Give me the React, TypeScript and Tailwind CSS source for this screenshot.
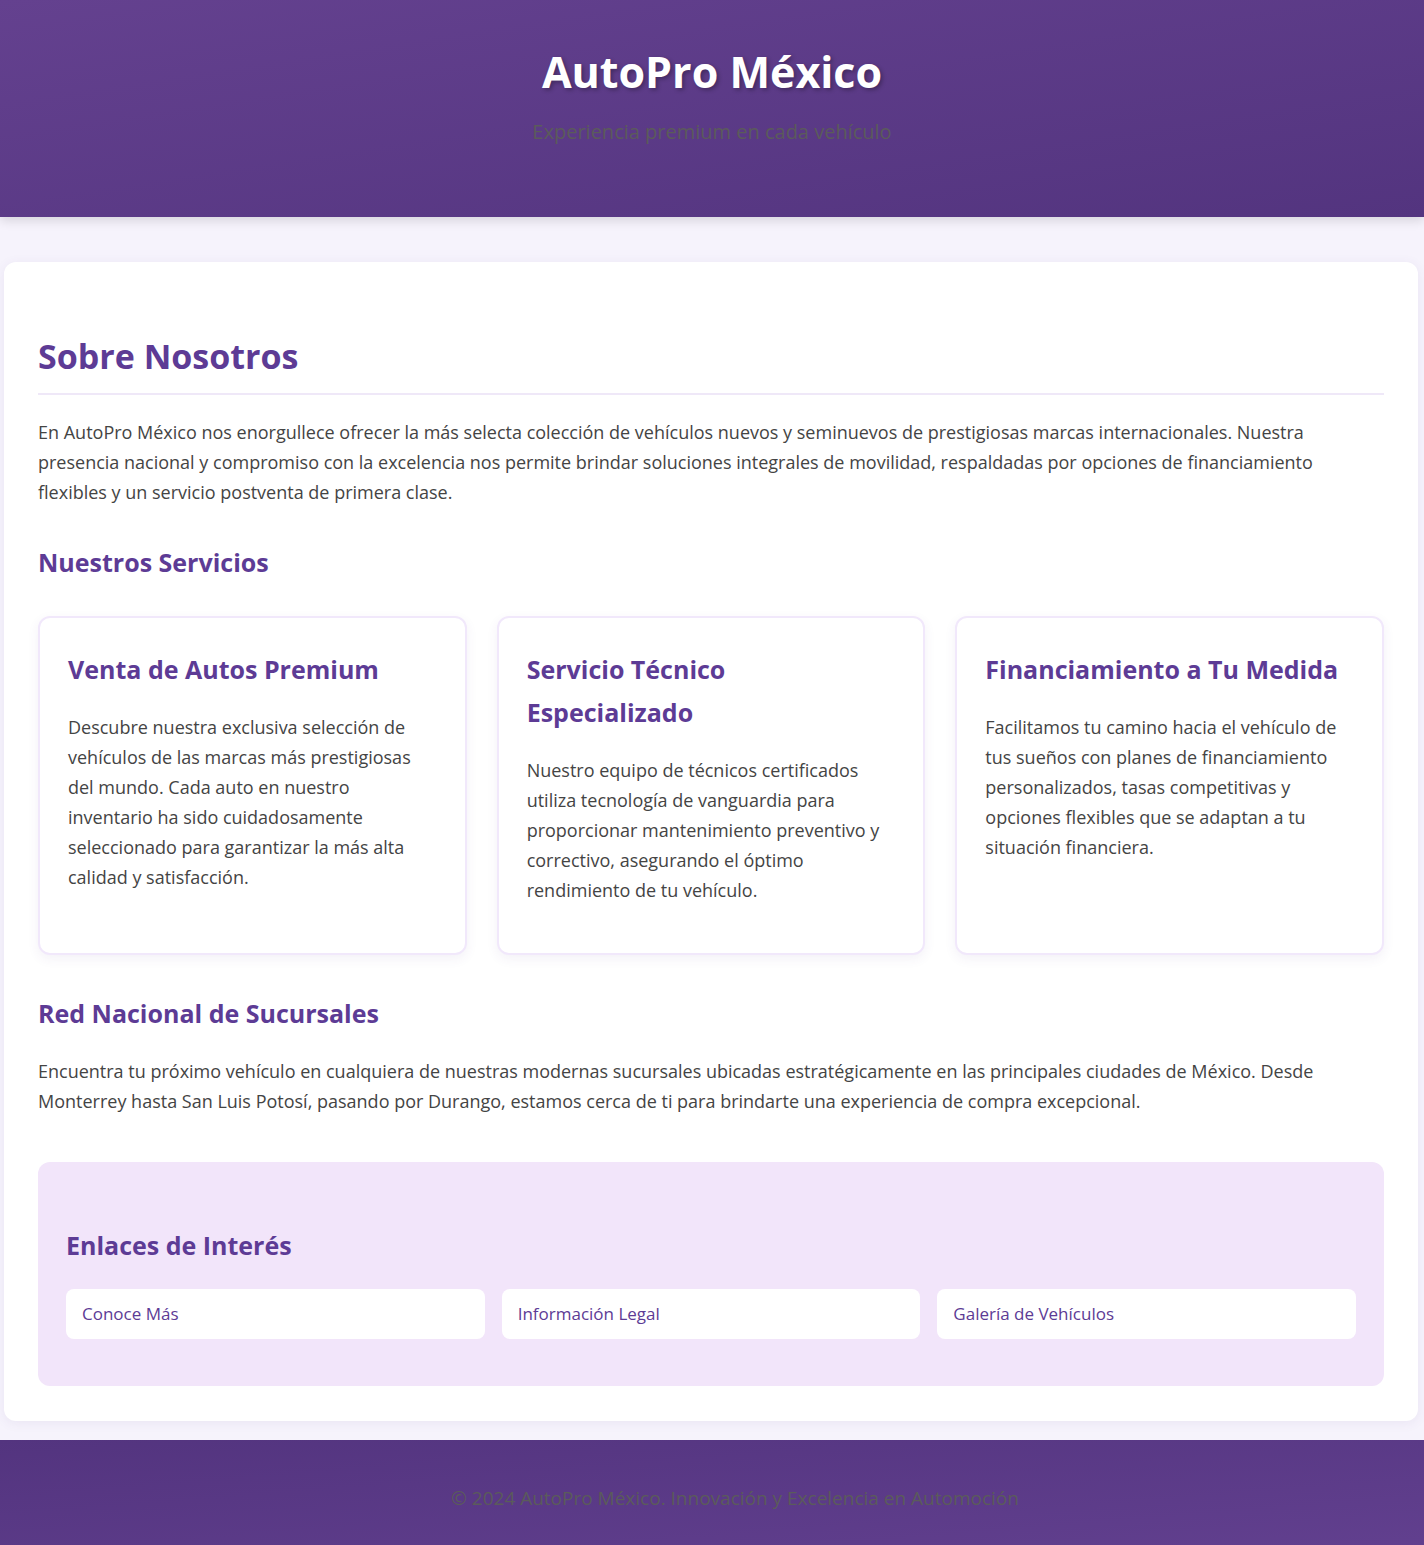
const services = [
  {
    title: 'Venta de Autos Premium',
    text: 'Descubre nuestra exclusiva selección de vehículos de las marcas más prestigiosas del mundo. Cada auto en nuestro inventario ha sido cuidadosamente seleccionado para garantizar la más alta calidad y satisfacción.',
  },
  {
    title: 'Servicio Técnico Especializado',
    text: 'Nuestro equipo de técnicos certificados utiliza tecnología de vanguardia para proporcionar mantenimiento preventivo y correctivo, asegurando el óptimo rendimiento de tu vehículo.',
  },
  {
    title: 'Financiamiento a Tu Medida',
    text: 'Facilitamos tu camino hacia el vehículo de tus sueños con planes de financiamiento personalizados, tasas competitivas y opciones flexibles que se adaptan a tu situación financiera.',
  },
]

const links = ['Conoce Más', 'Información Legal', 'Galería de Vehículos']

export default function App() {
  return (
    <div className="min-h-screen bg-[#f6f3fc] font-['Open_Sans','Noto_Sans',sans-serif] text-[#444]">
      {/* HEADER */}
      <header className="h-[217px] bg-gradient-to-br from-[#64418f] to-[#53347f] shadow-[0_4px_10px_rgba(0,0,0,0.12)] flex flex-col items-center pt-[46px]">
        <h1 className="text-[43px] leading-[52px] font-bold text-white [text-shadow:2px_2px_4px_rgba(0,0,0,0.3)]">
          AutoPro México
        </h1>
        <p className="mt-[19px] text-[20px] leading-[30px] text-[#5b5b5b]">Experiencia premium en cada vehículo</p>
      </header>

      {/* MAIN CARD */}
      <main className="mt-[45px] ml-[4px] mr-[6px] bg-white rounded-[12px] shadow-[0_2px_12px_rgba(90,60,140,0.08)] px-[34px] pt-[74px] pb-[35px]">
        <h2 className="text-[34px] leading-[40px] font-bold text-[#5d3b95] pb-[17px] border-b-2 border-[#efe8f8]">
          Sobre Nosotros
        </h2>
        <p className="mt-[22px] text-[18px] leading-[30px]">
          En AutoPro México nos enorgullece ofrecer la más selecta colección de vehículos nuevos y seminuevos de prestigiosas marcas internacionales. Nuestra presencia nacional y compromiso con la excelencia nos permite brindar soluciones integrales de movilidad, respaldadas por opciones de financiamiento flexibles y un servicio postventa de primera clase.
        </p>

        <h3 className="mt-[39px] text-[25px] leading-[32px] font-bold text-[#5d3b95]">Nuestros Servicios</h3>

        <div className="mt-[38px] grid grid-cols-3 gap-[30px]">
          {services.map(s => (
            <div
              key={s.title}
              className="h-[339px] rounded-[12px] border-2 border-[#f1e8fb] bg-white shadow-[0_4px_12px_rgba(90,60,140,0.07)] px-[28px] pt-[30px]"
            >
              <h4 className="text-[25px] leading-[43px] font-bold text-[#5d3b95]">{s.title}</h4>
              <p className="mt-[21px] text-[18px] leading-[30px]">{s.text}</p>
            </div>
          ))}
        </div>

        <h3 className="mt-[42px] text-[25px] leading-[32px] font-bold text-[#5d3b95]">Red Nacional de Sucursales</h3>
        <p className="mt-[27px] text-[18px] leading-[30px]">
          Encuentra tu próximo vehículo en cualquiera de nuestras modernas sucursales ubicadas estratégicamente en las principales ciudades de México. Desde Monterrey hasta San Luis Potosí, pasando por Durango, estamos cerca de ti para brindarte una experiencia de compra excepcional.
        </p>

        {/* LINKS */}
        <div className="mt-[46px] rounded-[12px] bg-[#f2e5fa] px-[28px] pt-[67px] pb-[47px]">
          <h3 className="text-[25px] leading-[32px] font-bold text-[#5d3b95]">Enlaces de Interés</h3>
          <div className="mt-[28px] grid grid-cols-3 gap-[17px]">
            {links.map(l => (
              <a key={l} href="#" className="h-[50px] flex items-center rounded-[8px] bg-white px-[16px] text-[17px] text-[#5d3b95]">
                {l}
              </a>
            ))}
          </div>
        </div>
      </main>

      {/* FOOTER */}
      <footer className="mt-[19px] h-[116px] bg-gradient-to-br from-[#53347f] to-[#62408f] flex items-center justify-center pl-[46px]">
        <p className="text-[19px] text-[#5b5b5b]">© 2024 AutoPro México. Innovación y Excelencia en Automoción</p>
      </footer>
    </div>
  )
}
